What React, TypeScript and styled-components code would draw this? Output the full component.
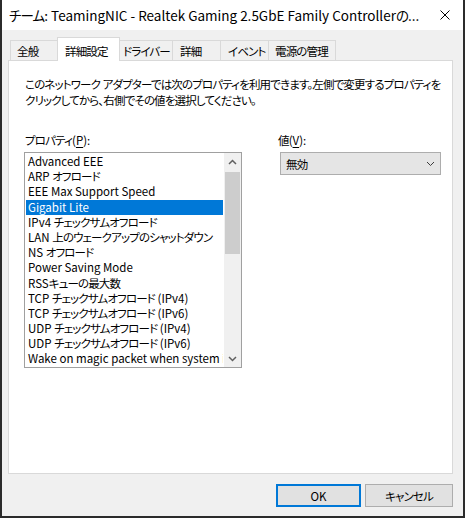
import React from 'react';
import styled, { createGlobalStyle } from 'styled-components';

const GlobalStyle = createGlobalStyle`
  html, body {
    margin: 0;
    padding: 0;
    background: #ffffff;
  }
  body {
    font-family: "Noto Sans CJK JP", "Noto Sans", sans-serif;
    font-feature-settings: "palt";
    font-size: 11.5px;
    color: #000;
  }
`;

const Ja = styled.span`
  letter-spacing: -0.85px;
`;

const cjk = /([\u3000-\u30ff\u3400-\u9fff\uff00-\uffef]+)/;
const jp = (text: string) =>
  text.split(cjk).map((part, i) => (i % 2 ? <Ja key={i}>{part}</Ja> : part));

const Window = styled.div`
  width: 465px;
  height: 518px;
  box-sizing: border-box;
  border: 2px solid #2b2b2b;
  border-top: none;
  background: #f0f0f0;
  display: flex;
  flex-direction: column;
`;

const TitleBar = styled.div`
  height: 30px;
  flex: none;
  background: #ffffff;
  display: flex;
  align-items: center;
  padding: 0 8px 0 7px;
`;

const Title = styled.div`
  flex: 1;
  font-size: 13.5px;
  white-space: nowrap;
`;

const CloseButton = styled.div`
  width: 20px;
  display: flex;
  justify-content: center;
  align-items: center;
`;

const Body = styled.div`
  flex: 1;
  display: flex;
  flex-direction: column;
  padding: 7px 10px 0 6px;
`;

const TabList = styled.div`
  display: flex;
  align-items: flex-end;
  height: 24px;
  padding-left: 2px;
  position: relative;
  z-index: 1;
  margin-bottom: -1px;
`;

const Tab = styled.div<{ $w: number; $pad: number; $active?: boolean }>`
  box-sizing: border-box;
  width: ${({ $w }) => $w}px;
  height: ${({ $active }) => ($active ? 24 : 21)}px;
  margin-left: -1px;
  padding: ${({ $active }) => ($active ? 2 : 0)}px 0 0 ${({ $pad }) => $pad}px;
  border: 1px solid #d9d9d9;
  border-bottom: ${({ $active }) => ($active ? 'none' : '1px solid #d9d9d9')};
  background: ${({ $active }) => ($active ? '#ffffff' : '#f0f0f0')};
  position: relative;
  z-index: ${({ $active }) => ($active ? 2 : 1)};
  display: flex;
  align-items: center;
  white-space: nowrap;
  &:first-child {
    margin-left: 0;
  }
`;

const Panel = styled.div`
  height: 414px;
  box-sizing: border-box;
  background: #ffffff;
  border: 1px solid #d9d9d9;
  padding: 15px 15px 0 15px;
`;

const Description = styled.p`
  margin: 0;
  line-height: 16px;
  padding-left: 1px;
  white-space: nowrap;
`;

const Columns = styled.div`
  display: grid;
  grid-template-columns: 218px 1fr;
  column-gap: 35px;
  margin-top: 24px;
`;

const Field = styled.div`
  display: flex;
  flex-direction: column;
  gap: 4px;
`;

const Label = styled.div`
  line-height: 16px;
  padding-left: 1px;
  u {
    text-decoration: underline;
    text-underline-offset: 2px;
  }
`;

const ListBox = styled.div`
  height: 216px;
  box-sizing: border-box;
  border: 1px solid #a0a0a0;
  display: flex;
  overflow: hidden;
`;

const Items = styled.div`
  flex: 1;
  min-width: 0;
  padding: 1px 1px 0;
`;

const Item = styled.div<{ $selected?: boolean }>`
  height: 15.2px;
  line-height: 15.2px;
  padding-left: 2px;
  white-space: nowrap;
  overflow: hidden;
  background: ${({ $selected }) => ($selected ? '#0078d7' : 'transparent')};
  color: ${({ $selected }) => ($selected ? '#ffffff' : '#000000')};
`;

const ScrollBar = styled.div`
  width: 17px;
  flex: none;
  background: #f0f0f0;
  display: flex;
  flex-direction: column;
  align-items: center;
`;

const ScrollArrow = styled.div`
  height: 17px;
  width: 17px;
  display: flex;
  align-items: center;
  justify-content: center;
`;

const ScrollTrack = styled.div`
  flex: 1;
  width: 100%;
  padding: 2px 1px 0;
  box-sizing: border-box;
`;

const Thumb = styled.div`
  height: 82px;
  background: #cdcdcd;
`;

const Select = styled.div`
  margin-left: 3px;
  width: 161px;
  height: 23px;
  box-sizing: border-box;
  background: #e5e5e5;
  border: 1px solid #adadad;
  display: flex;
  align-items: center;
  justify-content: space-between;
  padding: 0 5px 0 5px;
`;

const Footer = styled.div`
  display: flex;
  justify-content: flex-end;
  gap: 4px;
  padding-top: 10px;
`;

const Button = styled.div<{ $w: number; $default?: boolean }>`
  width: ${({ $w }) => $w}px;
  height: 23px;
  box-sizing: border-box;
  background: #e1e1e1;
  border: ${({ $default }) => ($default ? '2px solid #0078d7' : '1px solid #adadad')};
  display: flex;
  align-items: center;
  justify-content: center;
`;

const Chevron = ({ up, thin }: { up?: boolean; thin?: boolean }) => (
  <svg width="9" height="6" viewBox="0 0 9 6">
    <path
      d={up ? 'M1 5 L4.5 1.5 L8 5' : 'M1 1 L4.5 4.5 L8 1'}
      fill="none"
      stroke={thin ? '#3c3c3c' : '#606060'}
      strokeWidth={thin ? 1 : 1.5}
    />
  </svg>
);

const tabs: [string, number, number][] = [
  ['全般', 48, 6],
  ['詳細設定', 63, 7],
  ['ドライバー', 54, 3],
  ['詳細', 49, 7],
  ['イベント', 49, 7],
  ['電源の管理', 68, 6],
];

const properties = [
  'Advanced EEE',
  'ARP オフロード',
  'EEE Max Support Speed',
  'Gigabit Lite',
  'IPv4 チェックサムオフロード',
  'LAN 上のウェークアップのシャットダウン',
  'NS オフロード',
  'Power Saving Mode',
  'RSSキューの最大数',
  'TCP チェックサムオフロード (IPv4)',
  'TCP チェックサムオフロード (IPv6)',
  'UDP チェックサムオフロード (IPv4)',
  'UDP チェックサムオフロード (IPv6)',
  'Wake on magic packet when system is in the S0ix power state',
];

export default function App() {
  return (
    <>
      <GlobalStyle />
      <Window>
        <TitleBar>
          <Title>{jp('チーム: TeamingNIC - Realtek Gaming 2.5GbE Family Controllerの...')}</Title>
          <CloseButton>
            <svg width="10" height="10" viewBox="0 0 10 10">
              <path d="M0.5 0.5 L9.5 9.5 M9.5 0.5 L0.5 9.5" stroke="#000" strokeWidth="1" />
            </svg>
          </CloseButton>
        </TitleBar>
        <Body>
          <TabList>
            {tabs.map(([name, w, pad], i) => (
              <Tab key={name} $w={w} $pad={pad} $active={i === 1}>
                {jp(name)}
              </Tab>
            ))}
          </TabList>
          <Panel>
            <Description>
              {jp('このネットワーク アダプターでは次のプロパティを利用できます。左側で変更するプロパティを')}
              <br />
              {jp('クリックしてから、右側でその値を選択してください。')}
            </Description>
            <Columns>
              <Field>
                <Label>
                  {jp('プロパティ')}(<u>P</u>):
                </Label>
                <ListBox>
                  <Items>
                    {properties.map((p, i) => (
                      <Item key={p} $selected={i === 3}>
                        {jp(p)}
                      </Item>
                    ))}
                  </Items>
                  <ScrollBar>
                    <ScrollArrow>
                      <Chevron up />
                    </ScrollArrow>
                    <ScrollTrack>
                      <Thumb />
                    </ScrollTrack>
                    <ScrollArrow>
                      <Chevron />
                    </ScrollArrow>
                  </ScrollBar>
                </ListBox>
              </Field>
              <Field>
                <Label>
                  {jp('値')}(<u>V</u>):
                </Label>
                <Select>
                  <span>{jp('無効')}</span>
                  <Chevron thin />
                </Select>
              </Field>
            </Columns>
          </Panel>
          <Footer>
            <Button $w={85} $default>
              OK
            </Button>
            <Button $w={88}>{jp('キャンセル')}</Button>
          </Footer>
        </Body>
      </Window>
    </>
  );
}
